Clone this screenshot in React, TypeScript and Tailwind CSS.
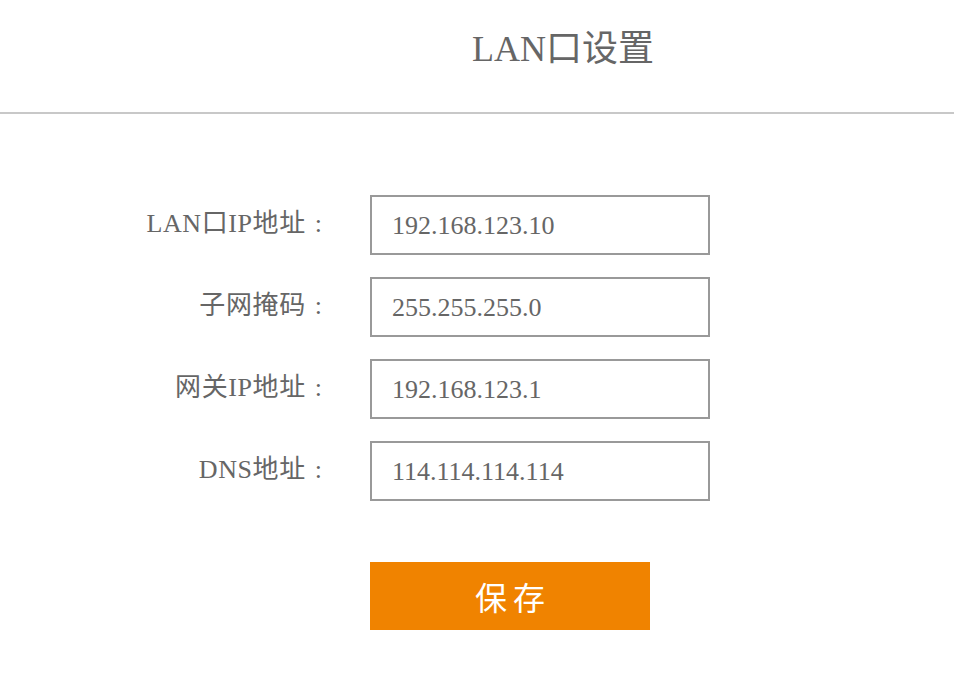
import React from 'react';

const fields = [
  { label: 'LAN口IP地址', value: '192.168.123.10' },
  { label: '子网掩码', value: '255.255.255.0' },
  { label: '网关IP地址', value: '192.168.123.1' },
  { label: 'DNS地址', value: '114.114.114.114' },
];

export default function App() {
  return (
    <div className="w-[954px] h-[700px] bg-white text-[#666] font-['Liberation_Serif','Noto_Sans_CJK_SC',serif]">
      <div className="h-[114px] border-b-2 border-[#c8c8c8] flex items-start justify-center pl-[172px] pt-[31px]">
        <h1 className="text-[36px] leading-none text-[#666]">LAN口设置</h1>
      </div>

      <div className="pt-[81px] flex flex-col gap-[22px]">
        {fields.map((f) => (
          <div key={f.label} className="flex items-center">
            <label className="w-[322px] flex justify-end items-center text-[26px] leading-none pb-[2px]">
              <span className="tracking-[0.6px]">{f.label}</span>
              <span className="ml-[9px]">:</span>
            </label>
            <div className="ml-[48px] w-[340px] h-[60px] border-2 border-[#999] flex items-center pl-[20px] text-[26px]">
              {f.value}
            </div>
          </div>
        ))}
      </div>

      <div className="pl-[370px] pt-[61px]">
        <button className="w-[280px] h-[68px] bg-[#f08300] text-white text-[32px] tracking-[6px] pl-[6px] flex items-center justify-center font-['Noto_Sans_CJK_SC',sans-serif]">
          保存
        </button>
      </div>
    </div>
  );
}
